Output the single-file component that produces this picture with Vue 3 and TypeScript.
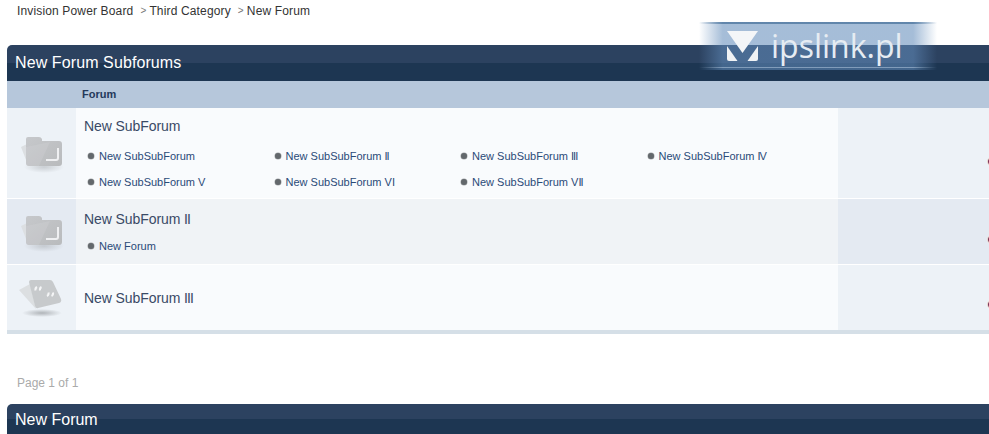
<script setup lang="ts">
interface Row {
  title: string
  tall: string
  icon: 'folder' | 'quote'
  alt: boolean
  subs: string[]
}

const rows: Row[] = [
  {
    title: 'New SubForum',
    tall: 'row-a',
    icon: 'folder',
    alt: false,
    subs: [
      'New SubSubForum',
      'New SubSubForum II',
      'New SubSubForum III',
      'New SubSubForum IV',
      'New SubSubForum V',
      'New SubSubForum VI',
      'New SubSubForum VII',
    ],
  },
  { title: 'New SubForum II', tall: 'row-b', icon: 'folder', alt: true, subs: ['New Forum'] },
  { title: 'New SubForum III', tall: 'row-c', icon: 'quote', alt: false, subs: [] },
]

// The reference renders capital I very narrowly, so those letters get tighter tracking.
const parts = (text: string): string[] => text.split(/(I+)/).filter(Boolean)
</script>

<template>
  <div class="page">
    <nav class="crumbs">
      <span>Invision Power Board</span>
      <span class="sep">&gt;</span>
      <span>Third Category</span>
      <span class="sep">&gt;</span>
      <span>New Forum</span>
    </nav>

    <section class="board">
      <h2 class="maintitle first">New Forum Subforums</h2>
      <div class="colhead"><span>Forum</span></div>

      <div v-for="row in rows" :key="row.title" class="row" :class="[row.tall, { alt: row.alt }]">
        <div class="cell-icon">
          <svg v-if="row.icon === 'folder'" width="44" height="44" viewBox="0 0 44 44">
            <defs>
              <linearGradient :id="'f' + row.title.length" x1="0" y1="0" x2="1" y2="1">
                <stop offset="0" stop-color="#c6c8cb" />
                <stop offset="1" stop-color="#b9bbbd" />
              </linearGradient>
              <radialGradient :id="'s' + row.title.length">
                <stop offset="0" stop-color="#9ea2a6" stop-opacity=".45" />
                <stop offset="1" stop-color="#9ea2a6" stop-opacity="0" />
              </radialGradient>
            </defs>
            <ellipse cx="24" cy="36" rx="20" ry="6" :fill="'url(#s' + row.title.length + ')'" />
            <path d="M1 16 L7 13 L8 34 Z" fill="#dcdfe2" />
            <path d="M6 8 Q6 6 8 6 L19 6 Q21 6 22 8 L22 10 L39 10 Q42 10 42 13 L42 32 Q42 35 39 35 L9 35 Q6 35 6 32 Z" :fill="'url(#f' + row.title.length + ')'" />
            <path d="M6 16 L30 11 L19 35 L9 35 Q6 35 6 32 Z" fill="#d6d8da" opacity=".25" />
            <path d="M38 17 L38 27 Q38 29 36 29 L26 29" fill="none" stroke="#eff0f2" stroke-width="2" />
          </svg>
          <svg v-else width="48" height="44" viewBox="0 0 48 44">
            <defs>
              <radialGradient id="qs">
                <stop offset="0" stop-color="#8f9397" stop-opacity=".65" />
                <stop offset="1" stop-color="#8f9397" stop-opacity="0" />
              </radialGradient>
            </defs>
            <ellipse cx="24" cy="37" rx="20" ry="4" fill="url(#qs)" />
            <path d="M1 14 L12 8 L18 33 Z" fill="#dcdfe1" />
            <path d="M11 6 Q11 4 13 4 L32 4 Q34 4 35 6 L43 23 Q44 26 41 27 L20 32 Q18 33 17 30 Z" fill="#c7cacc" />
            <path d="M19 11 q-2 1 -1.5 3.5 M23.5 11 q-2 1 -1.5 3.5 M29 20 q2 -1 1.5 -3.5 M33.5 20 q2 -1 1.5 -3.5" fill="none" stroke="#f4f5f6" stroke-width="2" />
          </svg>
        </div>
        <div class="cell-main">
          <h4 class="row-title">
            <span v-for="(p, i) in parts(row.title)" :key="i" :class="{ narrow: p[0] === 'I' }">{{ p }}</span>
          </h4>
          <ul v-if="row.subs.length" class="subs">
            <li v-for="sub in row.subs" :key="sub">
              <span v-for="(p, i) in parts(sub)" :key="i" :class="{ narrow: p[0] === 'I' }">{{ p }}</span>
            </li>
          </ul>
        </div>
        <div class="cell-stats"><i class="sliver"></i></div>
      </div>
      <div class="bottom-rule"></div>
    </section>

    <p class="pages">Page 1 of 1</p>
    <h2 class="maintitle second">New Forum</h2>

    <div class="watermark">
      <svg width="32" height="30" viewBox="0 0 32 30">
        <path d="M0 0 H31 L15.5 22 Z" fill="#f4f6f8" />
        <path d="M0 15 L10.5 30 H2 Q0 30 0 28 Z" fill="#f0f2f4" />
        <path d="M31 15 L20.5 30 H29 Q31 30 31 28 Z" fill="#f0f2f4" />
      </svg>
      <span>ipslink.pl</span>
    </div>
  </div>
</template>

<style>
html, body { margin: 0; overflow: hidden; background: #fff; }
</style>

<style scoped>
.page {
  position: relative;
  width: 989px;
  height: 434px;
  overflow: hidden;
  font-family: "Liberation Sans", Arial, sans-serif;
  color: #1c2837;
}
.crumbs {
  height: 45px;
  box-sizing: border-box;
  padding: 4px 0 0 17px;
  display: flex;
  font-size: 12px;
  letter-spacing: .15px;
  line-height: 14px;
  color: #333;
}
.sep { margin: 0 3px 0 7px; color: #777; font-size: 10px; }
.board { margin-left: 7px; width: 1000px; }
.maintitle {
  margin: 0;
  height: 36px;
  padding-left: 8px;
  border-radius: 5px 0 0 0;
  background: linear-gradient(#2c4260 0, #2c4260 50%, #1d3652 50%, #1d3652 100%);
  color: #fff;
  font-size: 16px;
  font-weight: 400;
  line-height: 36px;
}
.first { letter-spacing: .1px; }
.colhead {
  height: 27px;
  background: #b6c7db;
  padding-left: 75px;
  color: #24395a;
  font-size: 11px;
  font-weight: 700;
  line-height: 27px;
}
.row { display: flex; border-bottom: 1px solid #fff; background: #fafbfc; }
.row-a { height: 90px; }
.row-b { height: 65px; }
.row-c { height: 65px; border-bottom: 0; }
.cell-icon {
  width: 69px;
  display: flex;
  align-items: center;
  justify-content: center;
  background: #edf2f7;
}
.cell-main { width: 762px; padding-left: 8px; box-sizing: border-box; background: #f9fbfd; }
.cell-stats { flex: 1; position: relative; background: #edf2f7; }
.alt .cell-icon, .alt .cell-stats { background: #e4eaf2; }
.alt .cell-main { background: #f0f3f6; }
.row-title {
  margin: 0;
  padding-top: 10px;
  color: #3a4a66;
  font-size: 14px;
  font-weight: 400;
  letter-spacing: -.08px;
  line-height: 17px;
}
.row-b .row-title { padding-top: 12px; }
.row-c .row-title { padding-top: 25px; }
.narrow { letter-spacing: -1px; }
.subs {
  list-style: none;
  margin: 14px 0 0;
  padding: 0 0 0 15px;
  display: grid;
  grid-template-columns: repeat(4, 186.5px);
  grid-auto-rows: 26px;
  color: #2a4a78;
  font-size: 11px;
  line-height: 14px;
}
.row-b .subs { margin-top: 11px; }
.subs li { position: relative; }
.subs li::before {
  content: "";
  position: absolute;
  left: -11px;
  top: 4px;
  width: 6px;
  height: 6px;
  border-radius: 50%;
  background: #63686c;
  box-shadow: 0 0 0 .5px #a5a8ab;
}
.sliver {
  position: absolute;
  left: 150px;
  top: 50px;
  width: 8px;
  height: 7px;
  border-radius: 50%;
  background: #7b3058;
  box-shadow: 0 0 0 1px #e8d8cc;
}
.row-b .sliver { top: 37px; }
.row-c .sliver { top: 36px; }
.bottom-rule { height: 4px; background: #d5dfe7; }
.pages {
  margin: 0;
  padding: 42px 0 0 17px;
  height: 28px;
  color: #aaa;
  font-size: 12px;
  line-height: 14px;
}
.second { margin-left: 7px; width: 1000px; height: 30px; line-height: 31px; }
.watermark {
  position: absolute;
  left: 699px;
  top: 22px;
  width: 238px;
  height: 48px;
  box-sizing: border-box;
  padding-left: 28px;
  display: flex;
  align-items: center;
  gap: 12px;
  color: #e6ecf2;
  background:
    linear-gradient(90deg, transparent, rgba(80, 120, 160, .8) 10%, rgba(80, 120, 160, .8) 90%, transparent) 0 0 / 100% 2px no-repeat,
    linear-gradient(90deg, transparent, rgba(190, 210, 230, .5) 10%, rgba(190, 210, 230, .5) 90%, transparent) 0 45px / 100% 1px no-repeat,
    linear-gradient(90deg, rgba(97, 139, 186, 0), rgba(97, 139, 186, .57) 10%, rgba(97, 139, 186, .57) 90%, rgba(97, 139, 186, 0));
  font-family: "Open Sans", sans-serif;
  font-size: 32px;
  font-weight: 400;
}
.watermark span { line-height: 40px; margin-top: -1px; }
</style>
